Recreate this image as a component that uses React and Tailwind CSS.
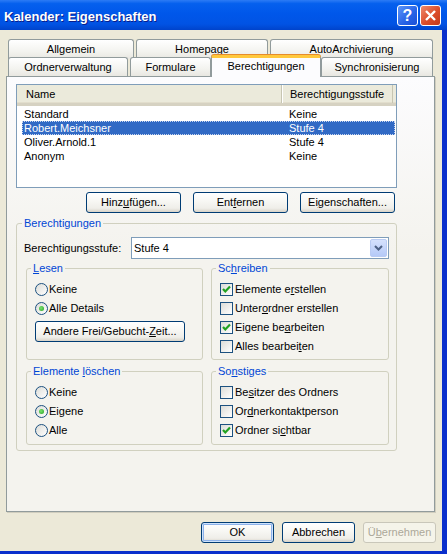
import React from "react";

// accelerator underline
const U = ({ children }) => <span className="underline underline-offset-[1px]">{children}</span>;

const XpButton = ({ className = "", children, isDefault, disabled }) => (
  <div
    className={`h-[21px] flex items-center justify-center rounded-[3px] border ${
      disabled
        ? "border-[#C9C7BA] bg-[#F5F4EA] text-[#ACA899]"
        : "border-[#003C74] bg-[linear-gradient(to_bottom,#FFFFFF_0%,#F9F9F6_35%,#EFEEE9_80%,#D8D3C8_100%)] text-black"
    } ${isDefault ? "shadow-[inset_0_0_0_1px_#CEE3FC,inset_0_0_0_2px_#8DB2EA]" : ""} ${className}`}
  >
    {children}
  </div>
);

const Radio = ({ checked, children }) => (
  <div className="h-[19px] flex items-center gap-[1px]">
    <div className="w-[13px] h-[13px] rounded-full border border-[#1C5180] bg-[linear-gradient(135deg,#DCDCD7,#FFFFFF)] flex items-center justify-center">
      {checked && (
        <div className="w-[5px] h-[5px] rounded-full bg-[radial-gradient(circle_at_40%_40%,#7BE26F,#21A121)]" />
      )}
    </div>
    <span>{children}</span>
  </div>
);

const Check = ({ checked, children }) => (
  <div className="h-[19px] flex items-center gap-[2px]">
    <div className="w-[13px] h-[13px] border border-[#1C5180] bg-[linear-gradient(135deg,#DCDCD7,#FFFFFF)] flex items-center justify-center">
      {checked && (
        <svg width="11" height="11" viewBox="0 0 11 11">
          <path d="M2 5 L4.3 7.5 L9 2.5" fill="none" stroke="#21A121" strokeWidth="2.2" />
        </svg>
      )}
    </div>
    <span>{children}</span>
  </div>
);

const Group = ({ title, className = "", children }) => (
  <fieldset className={`border border-[#D0D0BF] rounded-[3px] ${className}`}>
    <legend className="ml-[4px] px-[2px] leading-[13px] text-[#0046D5]">{title}</legend>
    {children}
  </fieldset>
);

const Tab = ({ className = "", children }) => (
  <div
    className={`flex items-center justify-center rounded-t-[3px] border border-b-0 border-[#919B9C] bg-[linear-gradient(to_bottom,#FFFFFF,#F3F3EF_60%,#E8E7E1)] ${className}`}
  >
    {children}
  </div>
);

const rows = [
  { name: "Standard", level: "Keine" },
  { name: "Robert.Meichsner", level: "Stufe 4", selected: true },
  { name: "Oliver.Arnold.1", level: "Stufe 4" },
  { name: "Anonym", level: "Keine" },
];

export default function App() {
  return (
    <div className="w-[447px] h-[554px] overflow-hidden flex flex-col bg-[#0A2FCC] font-['Liberation_Sans',Arial,sans-serif] text-[11px] text-black">
      {/* title bar */}
      <div className="h-[30px] w-full flex items-center pl-[4px] pr-[6px] pt-px bg-[linear-gradient(to_bottom,#2C7BF5_0%,#0560EE_12%,#0057EA_45%,#0153E4_80%,#0043CB_100%)]">
        <span className="flex-1 pt-[2px] font-bold text-[13px] text-white [text-shadow:1px_1px_0_#0A1D8A]">
          Kalender: Eigenschaften
        </span>
        <div className="flex gap-[2px]">
          <div className="w-[21px] h-[21px] rounded-[3px] border border-white bg-[linear-gradient(135deg,#5C95F8,#2762E6_60%,#1B4FD6)] flex items-center justify-center text-white font-bold text-[16px] leading-none">
            ?
          </div>
          <div className="w-[21px] h-[21px] rounded-[3px] border border-white bg-[linear-gradient(135deg,#EE8A6D,#DC4D2A_55%,#C5391A)] flex items-center justify-center">
            <svg width="13" height="13" viewBox="0 0 13 13">
              <path d="M2 2 L11 11 M11 2 L2 11" stroke="#FFFFFF" strokeWidth="2.4" />
            </svg>
          </div>
        </div>
      </div>

      {/* body */}
      <div className="w-[442px] h-[521px] bg-[#ECE9D8] pl-[6px] pt-[9px]">
        {/* tabs row 1 */}
        <div className="ml-[2px] flex gap-[2px] h-[18px]">
          <Tab className="w-[126px] h-[20px] pb-px">Allgemein</Tab>
          <Tab className="w-[132px] h-[20px] pb-px">Homepage</Tab>
          <Tab className="w-[163px] h-[20px] pb-px">AutoArchivierung</Tab>
        </div>
        {/* tabs row 2 */}
        <div className="ml-[2px] flex items-end h-[19px] relative">
          <Tab className="w-[120px] h-[19px] mr-[2px]">Ordnerverwaltung</Tab>
          <Tab className="w-[81px] h-[19px]">Formulare</Tab>
          <div className="w-[110px] h-[22px] -mb-px relative z-10 flex items-center justify-center rounded-t-[3px] border border-b-0 border-[#919B9C] border-t-[3px] border-t-[#FFC83C] shadow-[0_-1px_0_#E68B2C] bg-[#FCFCFE] pb-[2px]">
            Berechtigungen
          </div>
          <Tab className="w-[112px] h-[19px]">Synchronisierung</Tab>
        </div>

        {/* tab page */}
        <div className="w-[429px] h-[436px] border border-[#919B9C] bg-[linear-gradient(to_bottom,#FCFCFE,#F4F3EE_40%,#F4F3EE)] shadow-[1px_1px_0_#D0CDBE] pl-[9px] pt-[7px]">
          {/* list view */}
          <div className="w-[381px] h-[104px] border border-[#7F9DB9] bg-white">
            <div className="h-[21px] flex bg-[#EBEADB] border-b-[3px] border-[#D6D2C2] shadow-[inset_0_-1px_0_#E2DECD]">
              <div className="w-[265px] pl-[9px] flex items-center border-r border-[#C7C5B2]">Name</div>
              <div className="w-[111px] pl-[7px] flex items-center border-l border-white border-r border-r-[#C7C5B2]">
                Berechtigungsstufe
              </div>
            </div>
            <div className="pt-px">
              {rows.map((r) => (
                <div
                  key={r.name}
                  className={`h-[14px] ml-[5px] mr-[1px] flex items-center ${
                    r.selected ? "bg-[#316AC5] text-white outline-1 outline-dotted outline-offset-[-1px] outline-[#C9D6EE]" : ""
                  }`}
                >
                  <div className="w-[267px] pl-[2px]">{r.name}</div>
                  <div>{r.level}</div>
                </div>
              ))}
            </div>
          </div>

          {/* list buttons */}
          <div className="mt-[4px] pl-[70px] flex gap-[12px]">
            <XpButton className="w-[95px]">
              Hinz<U>u</U>fügen...
            </XpButton>
            <XpButton className="w-[95px]">
              Ent<U>f</U>ernen
            </XpButton>
            <XpButton className="w-[95px]">
              Ei<U>g</U>enschaften...
            </XpButton>
          </div>

          {/* Berechtigungen group */}
          <fieldset className="mt-[4px] w-[381px] h-[234px] border border-[#D0D0BF] rounded-[3px]">
            <legend className="ml-[5px] px-[2px] leading-[13px] text-[#0046D5]">Berechtigungen</legend>
            <div className="pl-[7px] pt-[7px]">
              <div className="flex items-center">
                <div className="w-[107px]">
                  Berechti<U>g</U>ungsstufe:
                </div>
                <div className="w-[258px] h-[22px] border border-[#7F9DB9] bg-white flex items-center pl-[2px] pr-px">
                  <span className="flex-1">Stufe 4</span>
                  <div className="w-[17px] h-[18px] rounded-[2px] border border-[#B9CBF3] bg-[linear-gradient(to_bottom,#D5E1FD,#B5C9F7)] flex items-center justify-center">
                    <svg width="9" height="6" viewBox="0 0 9 6">
                      <path d="M1 1 L4.5 4.5 L8 1" fill="none" stroke="#4D6185" strokeWidth="2" />
                    </svg>
                  </div>
                </div>
              </div>

              <div className="mt-[3px] ml-[2px] grid grid-cols-[177px_178px] gap-x-[8px] gap-y-[5px]">
                <Group title={<><U>L</U>esen</>} className="h-[98px]">
                  <div className="pl-[8px] pt-[5px]">
                    <Radio>Keine</Radio>
                    <Radio checked>Alle Details</Radio>
                    <XpButton className="mt-[3px] w-[150px]">
                      Andere Frei/Gebucht-<U>Z</U>eit...
                    </XpButton>
                  </div>
                </Group>
                <Group title={<>Sc<U>h</U>reiben</>} className="h-[98px]">
                  <div className="pl-[8px] pt-[5px]">
                    <Check checked>
                      Elemente e<U>r</U>stellen
                    </Check>
                    <Check>
                      Unter<U>o</U>rdner erstellen
                    </Check>
                    <Check checked>
                      Eigene be<U>a</U>rbeiten
                    </Check>
                    <Check>
                      Alles bearbei<U>t</U>en
                    </Check>
                  </div>
                </Group>
                <Group title={<>Elemente <U>l</U>öschen</>} className="h-[80px]">
                  <div className="pl-[8px] pt-[5px]">
                    <Radio>Keine</Radio>
                    <Radio checked>Eigene</Radio>
                    <Radio>Alle</Radio>
                  </div>
                </Group>
                <Group title={<>So<U>n</U>stiges</>} className="h-[80px]">
                  <div className="pl-[8px] pt-[5px]">
                    <Check>
                      Be<U>s</U>itzer des Ordners
                    </Check>
                    <Check>
                      Or<U>d</U>nerkontaktperson
                    </Check>
                    <Check checked>
                      Ordner si<U>c</U>htbar
                    </Check>
                  </div>
                </Group>
              </div>
            </div>
          </fieldset>
        </div>

        {/* dialog buttons */}
        <div className="mt-[10px] pl-[195px] flex gap-[8px]">
          <XpButton className="w-[73px]" isDefault>
            OK
          </XpButton>
          <XpButton className="w-[73px]">Abbrechen</XpButton>
          <XpButton className="w-[73px]" disabled>
            Ü<U>b</U>ernehmen
          </XpButton>
        </div>
      </div>
    </div>
  );
}
